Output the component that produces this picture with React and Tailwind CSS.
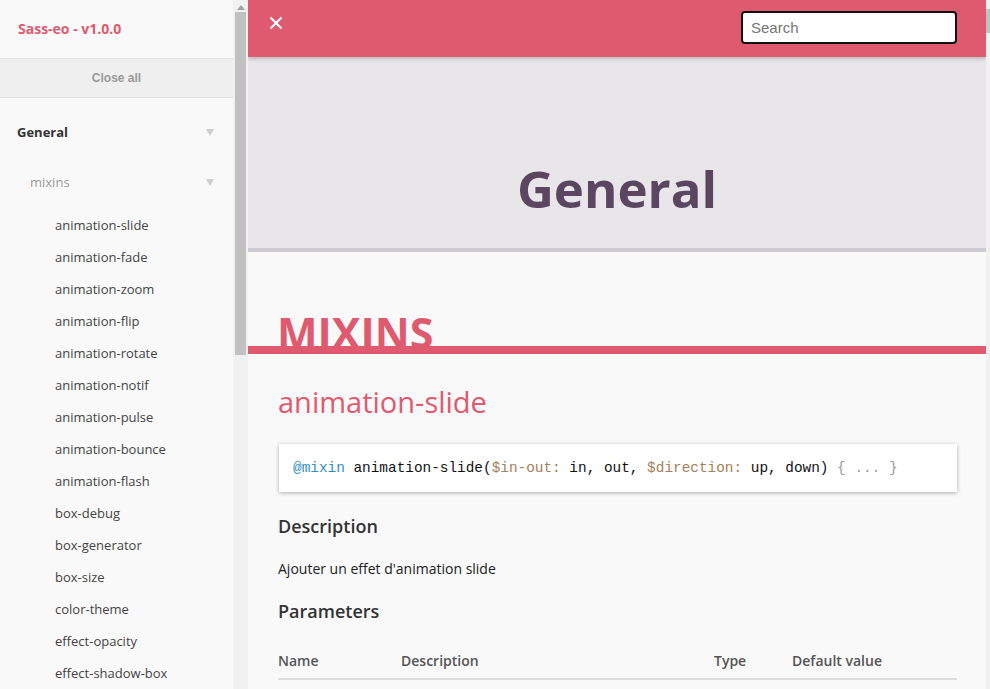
import React from "react";

const items = [
  "animation-slide",
  "animation-fade",
  "animation-zoom",
  "animation-flip",
  "animation-rotate",
  "animation-notif",
  "animation-pulse",
  "animation-bounce",
  "animation-flash",
  "box-debug",
  "box-generator",
  "box-size",
  "color-theme",
  "effect-opacity",
  "effect-shadow-box",
];

const Caret = () => (
  <svg width="8" height="7" viewBox="0 0 8 7" className="mr-[19px]">
    <path d="M0 0 L8 0 L4 7 Z" fill="#cfcfcf" />
  </svg>
);

const Sidebar = () => (
  <div className="flex h-full shrink-0">
    <aside className="w-[233px] h-full overflow-hidden bg-[#f9f9f9] font-['Open_Sans',sans-serif]">
      {/* Title */}
      <div className="h-[59px] flex items-center pl-[18px] pb-[2px] border-b border-[#e2e2e2]">
        <span className="text-[14px] font-bold text-[#e05a6f]">Sass-eo - v1.0.0</span>
      </div>
      <div className="h-[39px] flex items-center justify-center bg-[#efefef] border-b border-[#e2e2e2]">
        <span className="text-[12px] font-bold text-[#9a9a9a] font-['Liberation_Sans',Arial,sans-serif]">
          Close all
        </span>
      </div>

      {/* Nav */}
      <div className="h-[69px] flex items-center justify-between pl-[17px]">
        <span className="text-[13px] font-bold text-[#333]">General</span>
        <Caret />
      </div>
      <div className="h-[31px] flex items-center justify-between pl-[30px]">
        <span className="text-[13px] text-[#999]">mixins</span>
        <Caret />
      </div>
      <ul className="pt-[11px]">
        {items.map((item) => (
          <li key={item} className="h-[32px] leading-[32px] pl-[55px] text-[13px] text-[#444]">
            {item}
          </li>
        ))}
      </ul>
    </aside>

    {/* fake scrollbar */}
    <div className="w-[15px] h-full bg-[#f1f1f1] flex flex-col items-center">
      <svg width="8" height="5" viewBox="0 0 8 5" className="mt-[5px]">
        <path d="M0 5 L4 0 L8 5 Z" fill="#a3a3a3" />
      </svg>
      <div className="mt-[2px] w-[11px] h-[343px] bg-[#c1c1c1]" />
    </div>
  </div>
);

const Main = () => (
  <main className="flex-1 h-full flex flex-col overflow-hidden bg-[#f9f9f9] font-['Open_Sans',sans-serif]">
    {/* Top bar */}
    <header className="relative z-10 h-[57px] shrink-0 flex items-center justify-between pl-[21px] pr-[29px] bg-[#e05a6f] shadow-[0_2px_4px_rgba(0,0,0,0.2)]">
      <svg width="14" height="14" viewBox="0 0 14 14" className="mb-[11px]">
        <path d="M1.5 1.5 L12.5 12.5 M12.5 1.5 L1.5 12.5" stroke="#fff" strokeWidth="2" />
      </svg>
      <input
        type="text"
        placeholder="Search"
        className="mb-[3px] w-[216px] h-[33px] bg-white border-2 border-[#111] rounded-[4px] pl-[8px] text-[15px] text-[#333] placeholder:text-[#767676] font-['Liberation_Sans',Arial,sans-serif] outline-none"
      />
    </header>

    {/* Group banner */}
    <div className="h-[195px] shrink-0 bg-[#e8e6e9] border-b-4 border-[#cfcbd2] pt-[106px] text-center">
      <h1 className="text-[51px] leading-none font-bold text-[#5b4662]">General</h1>
    </div>

    <section className="pt-[56px]">
      <div className="pl-[29px] pt-[3px] h-[38px]">
        <h2 className="text-[43px] leading-none font-bold text-[#e05a6f]">MIXINS</h2>
      </div>
      <div className="relative z-10 h-[8px] bg-[#e05a6f]" />

      <div className="pr-[29px] pt-[33px] pl-[30px]">
        <h3 className="text-[29px] leading-none text-[#e05a6f]">animation-slide</h3>

        <pre className="mt-[28px] ml-[1px] h-[48px] flex items-center pt-[2px] pl-[14px] bg-white shadow-[0_1px_4px_rgba(0,0,0,0.3)] text-[14.4px] font-['DejaVu_Sans_Mono',monospace] text-[#111]">
          <code>
            <span className="text-[#2f8fbd]">@mixin</span> animation-slide(
            <span className="text-[#a67f59]">$in-out:</span> in, out,{" "}
            <span className="text-[#a67f59]">$direction:</span> up, down){" "}
            <span className="text-[#999]">{"{ ... }"}</span>
          </code>
        </pre>

        <h4 className="mt-[25px] text-[18px] leading-none font-semibold text-[#333]">Description</h4>
        <p className="mt-[27px] text-[14px] leading-none text-[#222]">Ajouter un effet d'animation slide</p>

        <h4 className="mt-[26px] text-[18px] leading-none font-semibold text-[#333]">Parameters</h4>

        <div className="mt-[34px] grid grid-cols-[123px_313px_78px_1fr] pb-[10px] border-b-2 border-[#dedede] text-[14px] leading-none font-semibold text-[#555]">
          <span>Name</span>
          <span>Description</span>
          <span>Type</span>
          <span>Default value</span>
        </div>
      </div>
    </section>
  </main>
);

export default function App() {
  return (
    <div className="w-[990px] h-[689px] flex overflow-hidden bg-[#f9f9f9]">
      <Sidebar />
      <Main />
      <div className="w-[4px] h-full bg-[#f1f1f1] pt-[9px]">
        <div className="h-[24px] bg-[#c1c1c1]" />
      </div>
    </div>
  );
}
